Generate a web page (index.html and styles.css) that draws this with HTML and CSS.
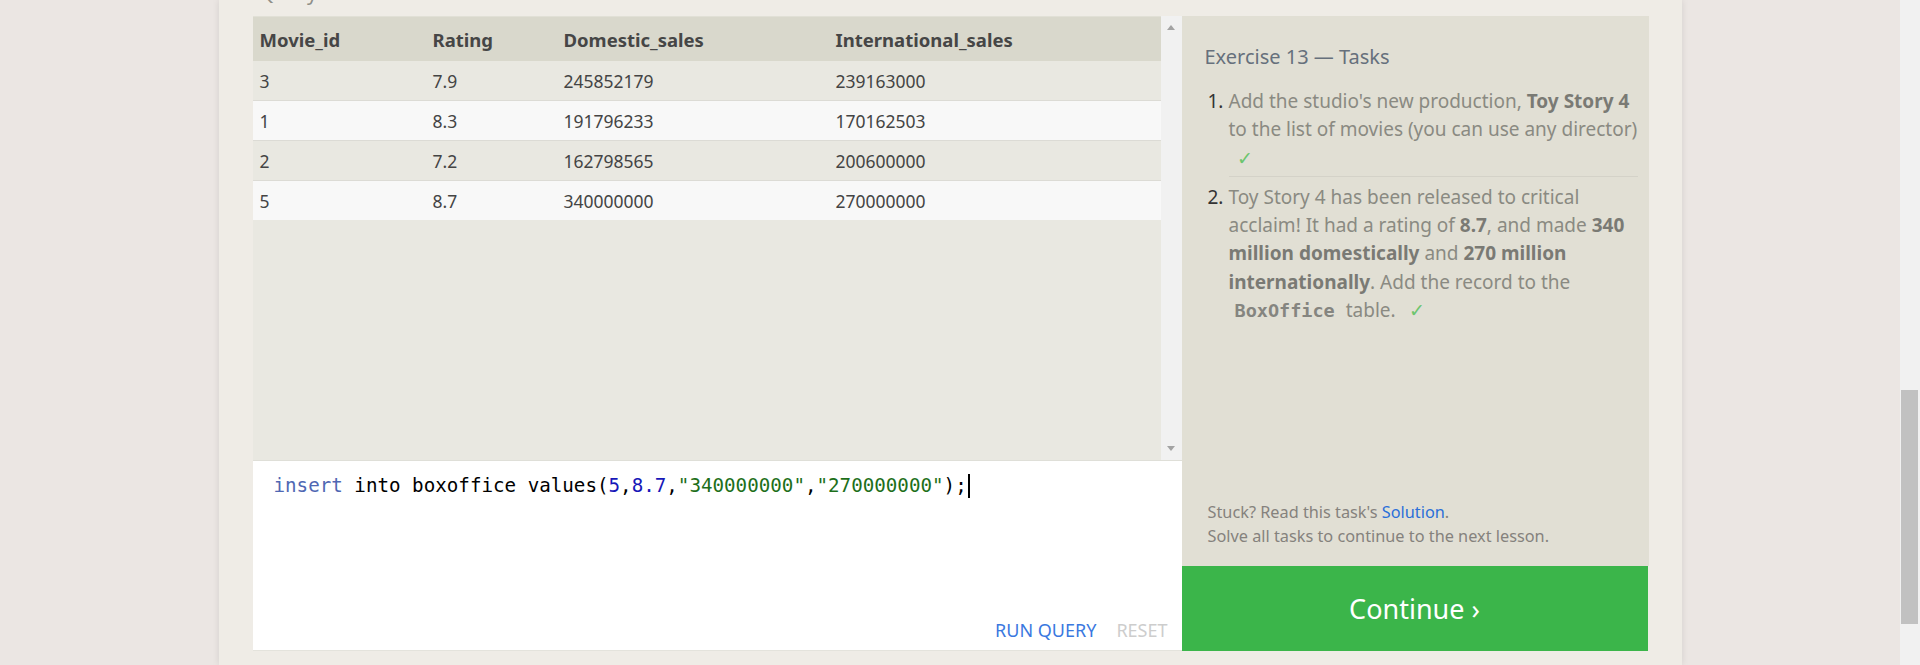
FILE: index.html
```html
<!DOCTYPE html>
<html>
<head>
<meta charset="utf-8">
<link rel="stylesheet" href="styles.css">
</head>
<body>
<div class="viewport">
  <div class="page">
    <div class="lesson">
      <div class="query-label"><span>Query</span></div>
      <div class="workspace">
        <div class="left">
          <div class="results">
            <div class="table-wrap">
              <table class="results-table">
                <thead>
                  <tr><th class="c1">Movie_id</th><th class="c2">Rating</th><th class="c3">Domestic_sales</th><th>International_sales</th></tr>
                </thead>
                <tbody>
                  <tr><td>3</td><td>7.9</td><td>245852179</td><td>239163000</td></tr>
                  <tr><td>1</td><td>8.3</td><td>191796233</td><td>170162503</td></tr>
                  <tr><td>2</td><td>7.2</td><td>162798565</td><td>200600000</td></tr>
                  <tr><td>5</td><td>8.7</td><td>340000000</td><td>270000000</td></tr>
                </tbody>
              </table>
            </div>
            <div class="mini-scroll">
              <span class="arrow up"></span>
              <span class="arrow down"></span>
            </div>
          </div>
          <div class="editor">
            <div class="code"><span class="kw">insert</span> into boxoffice values(<span class="num">5</span>,<span class="num">8.7</span>,<span class="str">"340000000"</span>,<span class="str">"270000000"</span>);<span class="cursor"></span></div>
            <div class="editor-actions">
              <span class="run">RUN QUERY</span>
              <span class="reset">RESET</span>
            </div>
          </div>
        </div>
        <div class="right">
          <div class="tasks">
            <div class="tasks-title">Exercise 13 — Tasks</div>
            <ol class="task-list">
              <li class="task">
                <span class="task-num">1.</span>
                <div class="task-text">Add the studio's new production, <b>Toy Story 4</b> to the list of movies (you can use any director) <span class="check">✓</span></div>
              </li>
              <li class="task task-sep">
                <span class="task-num">2.</span>
                <div class="task-text">Toy Story 4 has been released to critical acclaim! It had a rating of <b>8.7</b>, and made <b>340 million domestically</b> and <b>270 million internationally</b>. Add the record to the <code>BoxOffice</code> table. <span class="check">✓</span></div>
              </li>
            </ol>
            <div class="stuck">
              <div>Stuck? Read this task's <span class="link">Solution</span>.</div>
              <div>Solve all tasks to continue to the next lesson.</div>
            </div>
          </div>
          <div class="continue">Continue ›</div>
        </div>
      </div>
    </div>
  </div>
  <div class="page-scroll"><div class="thumb"></div></div>
</div>
</body>
</html>
```

FILE: styles.css
```css
html, body {
  margin: 0;
  padding: 0;
  height: 100%;
  overflow: hidden;
}
body {
  background: #ebe6e3;
  font-family: "Noto Sans", "Open Sans", sans-serif;
}
.viewport {
  display: flex;
  height: 665px;
}
.page {
  flex: 1;
  display: flex;
  justify-content: center;
}
.lesson {
  width: 1463px;
  box-sizing: border-box;
  padding: 0 33px 0 34px;
  background: #efece6;
  box-shadow: 0 0 7px rgba(0,0,0,0.10);
  height: 665px;
}
.query-label {
  height: 16px;
  overflow: hidden;
  font-size: 20px;
  color: #8e8e88;
  padding-left: 7px;
}
.query-label span {
  display: block;
  line-height: 20px;
  margin-top: -17px;
}
.workspace {
  display: flex;
  height: 635px;
}
.left {
  width: 929px;
  display: flex;
  flex-direction: column;
}
.results {
  height: 444px;
  display: flex;
  background: #e9e8e1;
  border-bottom: 1px solid #dfdfd8;
}
.table-wrap {
  flex: 1;
}
.results-table {
  width: 100%;
  border-collapse: collapse;
  font-size: 17.5px;
  color: #444;
}
.results-table th {
  background: #d9d8cc;
  height: 44px;
  text-align: left;
  font-weight: 700;
  font-size: 18.5px;
  padding: 0 0 0 7px;
  color: #464646;
  border-top: 1px solid #e1e0d6;
}
.results-table .c1 { width: 166px; }
.results-table .c2 { width: 124px; }
.results-table .c3 { width: 265px; }
.results-table td {
  height: 39px;
  padding: 0 0 0 7px;
  border-bottom: 1px solid #dcdbd5;
}
.results-table tbody tr:nth-child(odd) td { background: #e9e8e1; }
.results-table tbody tr:nth-child(even) td { background: #f8f8f8; }
.results-table tbody tr:last-child td { border-bottom: none; }
.mini-scroll {
  width: 21px;
  background: #f1f1f1;
  display: flex;
  flex-direction: column;
  justify-content: space-between;
  align-items: center;
  padding: 9px 0 9px;
}
.arrow {
  width: 0;
  height: 0;
  border-left: 4px solid transparent;
  border-right: 4px solid transparent;
}
.arrow.up { border-bottom: 5px solid #a3a3a3; }
.arrow.down { border-top: 5px solid #a3a3a3; }
.editor {
  height: 190px;
  background: #fff;
  border-bottom: 1px solid #e4e3dc;
  display: flex;
  flex-direction: column;
  justify-content: space-between;
  box-sizing: border-box;
}
.code {
  font-family: "DejaVu Sans Mono", "Liberation Mono", monospace;
  font-size: 19.2px;
  line-height: 24px;
  padding: 13px 0 0 21px;
  color: #000;
  white-space: pre;
}
.kw { color: #4f67b3; }
.num { color: #1717b8; }
.str { color: #1d6f1a; }
.cursor {
  display: inline-block;
  width: 2px;
  height: 24px;
  background: #000;
  vertical-align: top;
  margin-left: 1px;
}
.editor-actions {
  display: flex;
  justify-content: flex-end;
  gap: 20px;
  padding: 0 14px 8px 0;
  font-size: 18px;
  font-family: "Noto Sans", sans-serif;
  line-height: 24px;
}
.run { color: #3a78e0; }
.reset { color: #cdcdcd; }
.right {
  width: 467px;
  display: flex;
  flex-direction: column;
}
.tasks {
  flex: 1;
  background: #e1dfd4;
  display: flex;
  flex-direction: column;
  padding: 26px 11px 0 23px;
  box-sizing: border-box;
}
.tasks-title {
  font-size: 20px;
  line-height: 30px;
  color: #66707c;
  font-weight: 400;
}
.task-list {
  list-style: none;
  margin: 15px 0 0;
  padding: 0;
  flex: 1;
}
.task {
  display: flex;
  font-size: 19px;
  line-height: 28.3px;
  color: #8a8a82;
}
.task-num {
  width: 21px;
  flex: none;
  color: #333;
  padding-left: 3px;
}
.task-text {
  flex: 1;
  padding-bottom: 4px;
}
.task-text b {
  color: #7a7a74;
  font-weight: 700;
}
.task-sep .task-text {
  border-top: 1px solid #d4d2c8;
  padding-top: 6px;
}
.task-sep .task-num {
  padding-top: 7px;
}
.task-text code {
  font-family: "DejaVu Sans Mono", "Liberation Mono", monospace;
  font-weight: 700;
  font-size: 18.5px;
  color: #858580;
  padding: 0 6px;
}
.check {
  color: #6cc56e;
  margin-left: 8px;
}
.stuck {
  font-size: 16.3px;
  line-height: 24px;
  color: #85827d;
  padding: 0 0 18px 3px;
}
.link { color: #2b6fd9; }
.continue {
  height: 85px;
  background: #3bb54a;
  color: #fff;
  font-size: 27px;
  display: flex;
  align-items: center;
  justify-content: center;
  margin-right: 1px;
}
.page-scroll {
  width: 20px;
  background: #f1f1f1;
  position: relative;
}
.thumb {
  position: absolute;
  left: 1px;
  width: 17px;
  top: 390px;
  height: 234px;
  background: #c1c1c1;
}
```
